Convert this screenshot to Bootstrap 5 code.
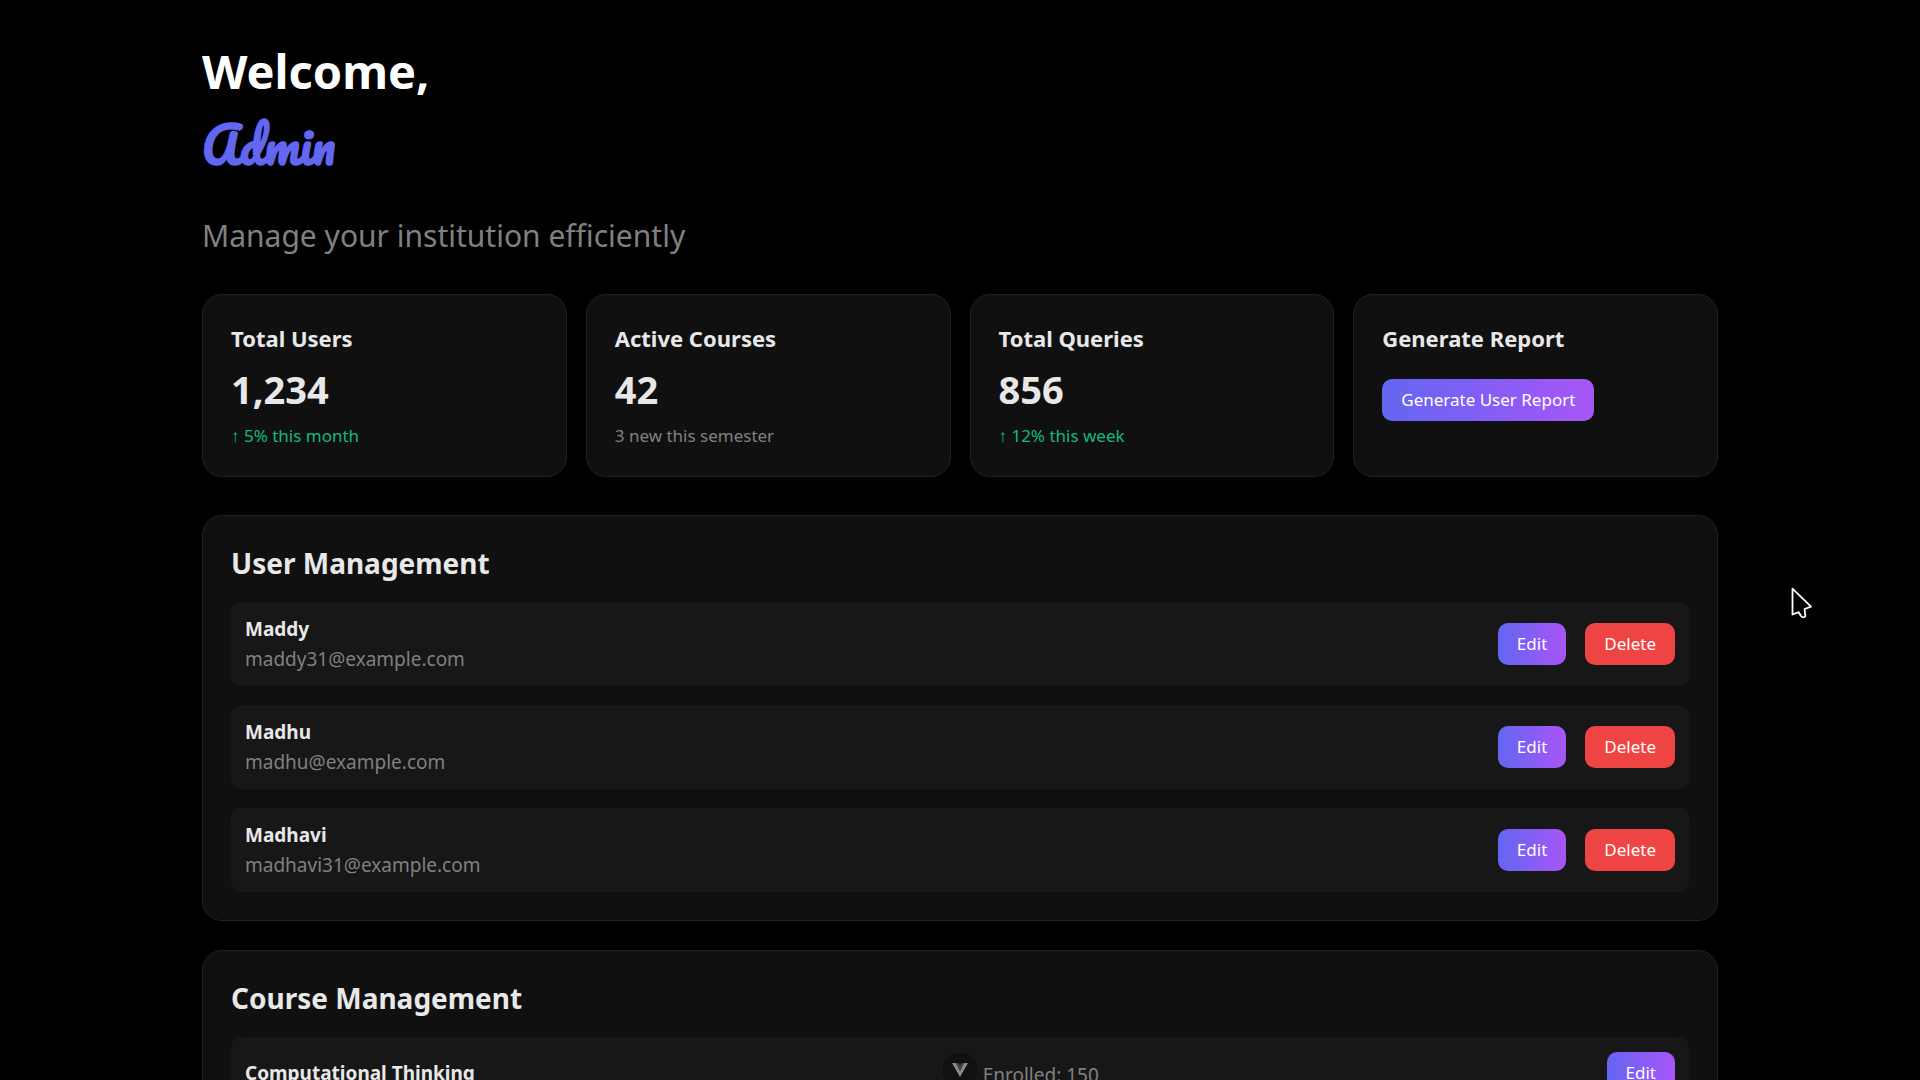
<!DOCTYPE html>
<html lang="en">
<head>
<meta charset="utf-8">
<meta name="viewport" content="width=device-width, initial-scale=1">
<title>Admin Dashboard</title>
<link href="https://cdn.jsdelivr.net/npm/bootstrap@5.3.0/dist/css/bootstrap.min.css" rel="stylesheet">
<style>
  html { scrollbar-width: none; }
  body { background: #000; color: #e8e8e8; font-family: "Noto Sans", sans-serif; font-size: 19px; line-height: 30px; overflow-x: hidden; }
  body::-webkit-scrollbar { display: none; }
  .page { max-width: 1516px; padding: 40px 0; }
  .hello { color: #fff; font-size: 47px; line-height: 63px; }
  .admin-name { color: #6366f1; font-family: Pacifico, cursive; font-size: 48px; line-height: 84px; margin-bottom: 25px; }
  .tagline { color: #808080; font-size: 30px; line-height: 48px; margin-bottom: 34px; }
  .soft { color: #808080; }
  .up { color: #10b981; }
  .panel { background: #101010; border: 1px solid #222; border-radius: 20px; padding: 28px; }
  .panel + .panel { margin-top: 29px; }
  .stats { --bs-gutter-x: 19px; --bs-gutter-y: 19px; margin-bottom: 38px; }
  .stat-title { font-size: 22px; line-height: 31px; margin-bottom: 10px; }
  .stat-value { font-size: 38px; line-height: 50px; margin-bottom: 10px; }
  .note { font-size: 17px; line-height: 24px; }
  .panel-title { font-size: 28px; line-height: 38px; margin-bottom: 20px; }
  .entries, .entry-actions { gap: 19px; }
  .entry { background: #171717; border-radius: 10px; padding: 12px 14px; min-height: 72px; }
  .btn-act { --bs-btn-color: #fff; --bs-btn-hover-color: #fff; --bs-btn-active-color: #fff; border: 0; border-radius: 10px; font-size: 17px; line-height: 26px; padding: 8px 19px; }
  .btn-grad { background: linear-gradient(90deg, #6366f1, #a855f7); }
  .btn-del, .btn-del:hover { background: #ef4444; }
  .report-btn { margin-top: 15px; }
  .pin { bottom: -9px; left: 50%; width: 38px; height: 38px; background: #111; border: 1px solid #1d1d1d; transform: translateX(-50%); }
  .pointer { left: 1790px; top: 586px; }
</style>
</head>
<body>
<main class="page mx-auto">
  <header>
    <h1 class="hello fw-bold mb-0">Welcome,</h1>
    <div class="admin-name fw-bold">Admin</div>
    <p class="tagline">Manage your institution efficiently</p>
  </header>

  <section class="row stats">
    <div class="col-12 col-md-6 col-xl-3">
      <div class="panel h-100">
        <h2 class="stat-title fw-bold">Total Users</h2>
        <div class="stat-value fw-bold">1,234</div>
        <div class="note up">↑ 5% this month</div>
      </div>
    </div>
    <div class="col-12 col-md-6 col-xl-3">
      <div class="panel h-100">
        <h2 class="stat-title fw-bold">Active Courses</h2>
        <div class="stat-value fw-bold">42</div>
        <div class="note soft">3 new this semester</div>
      </div>
    </div>
    <div class="col-12 col-md-6 col-xl-3">
      <div class="panel h-100">
        <h2 class="stat-title fw-bold">Total Queries</h2>
        <div class="stat-value fw-bold">856</div>
        <div class="note up">↑ 12% this week</div>
      </div>
    </div>
    <div class="col-12 col-md-6 col-xl-3">
      <div class="panel h-100">
        <h2 class="stat-title fw-bold">Generate Report</h2>
        <button type="button" class="btn btn-act btn-grad report-btn">Generate User Report</button>
      </div>
    </div>
  </section>

  <section class="panel">
    <h2 class="panel-title fw-bold">User Management</h2>
    <div class="entries d-flex flex-column">
      <div class="entry d-flex justify-content-between align-items-center">
        <div><div class="fw-bold">Maddy</div><div class="soft">maddy31@example.com</div></div>
        <div class="entry-actions d-flex">
          <button type="button" class="btn btn-act btn-grad">Edit</button>
          <button type="button" class="btn btn-act btn-del">Delete</button>
        </div>
      </div>
      <div class="entry d-flex justify-content-between align-items-center">
        <div><div class="fw-bold">Madhu</div><div class="soft">madhu@example.com</div></div>
        <div class="entry-actions d-flex">
          <button type="button" class="btn btn-act btn-grad">Edit</button>
          <button type="button" class="btn btn-act btn-del">Delete</button>
        </div>
      </div>
      <div class="entry d-flex justify-content-between align-items-center">
        <div><div class="fw-bold">Madhavi</div><div class="soft">madhavi31@example.com</div></div>
        <div class="entry-actions d-flex">
          <button type="button" class="btn btn-act btn-grad">Edit</button>
          <button type="button" class="btn btn-act btn-del">Delete</button>
        </div>
      </div>
    </div>
  </section>

  <section class="panel">
    <h2 class="panel-title fw-bold">Course Management</h2>
    <div class="entries d-flex flex-column">
      <div class="entry d-flex justify-content-between align-items-center">
        <div class="fw-bold">Computational Thinking</div>
        <div class="soft pt-1">Enrolled: 150</div>
        <button type="button" class="btn btn-act btn-grad">Edit</button>
      </div>
    </div>
  </section>
</main>

<div class="pin position-fixed rounded-circle d-flex justify-content-center align-items-center" aria-hidden="true">
  <svg width="16" height="14" viewBox="0 0 16 14"><path d="M0 0h4l4 8 4-8h4L8 14z" fill="#8a8a8a"/><path d="M4 0h2.500L8 2.500 9.500 0H12L8 8z" fill="#444"/></svg>
</div>
<svg class="pointer position-fixed" width="24" height="34" viewBox="0 0 24 34" fill="#000" stroke="#fff" stroke-width="1.800" stroke-linejoin="round" aria-hidden="true"><path d="M2.500 2.700V28.500L8.700 26.200 11 30q1.500 2 3.500 1 1.500-1 .5-3.500L14.600 23 21 20.700z"/></svg>
<script src="https://cdn.jsdelivr.net/npm/bootstrap@5.3.0/dist/js/bootstrap.bundle.min.js"></script>
</body>
</html>
